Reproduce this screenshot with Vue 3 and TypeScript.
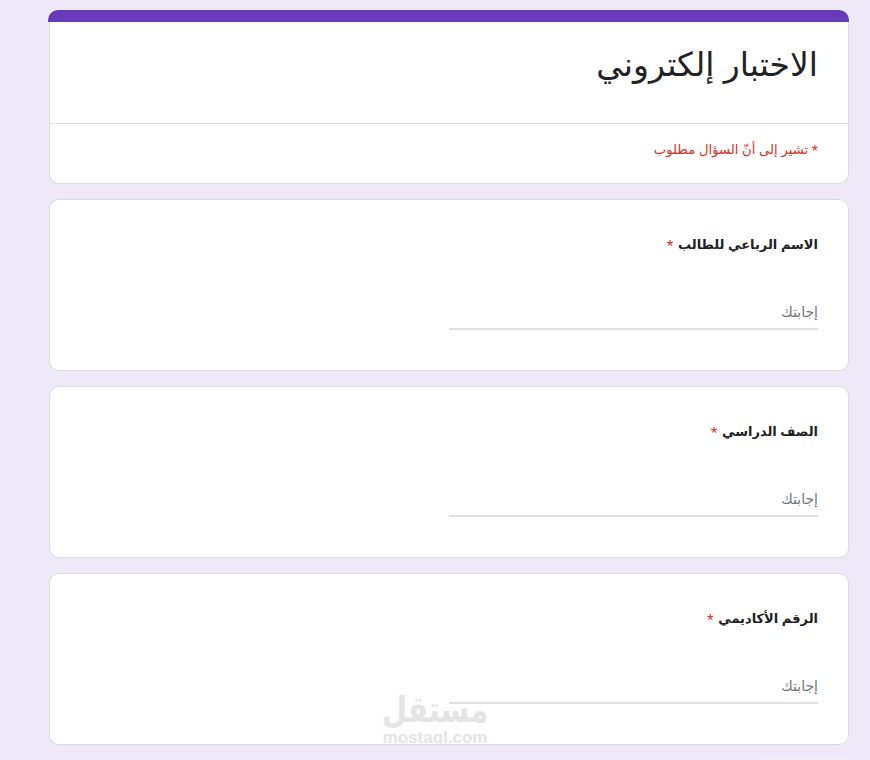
<script setup lang="ts">
const questions: string[] = ['الاسم الرباعي للطالب', 'الصف الدراسي', 'الرقم الأكاديمي']
</script>

<template>
  <div class="page" dir="rtl">
    <section class="card head">
      <div class="stripe"></div>
      <h1 class="title">الاختبار إلكتروني</h1>
      <div class="note"><span class="note-star">*</span> تشير إلى أنّ السؤال مطلوب</div>
    </section>
    <section v-for="q in questions" :key="q" class="card question">
      <div class="label">{{ q }} <span class="star">*</span></div>
      <div class="answer">إجابتك</div>
    </section>
    <div class="tail"></div>
    <div class="mark" dir="rtl">
      <div class="mark-ar">مستقل</div>
      <div class="mark-en">mostaql.com</div>
    </div>
  </div>
</template>

<style scoped>
.page {
  position: relative;
  box-sizing: border-box;
  width: 870px;
  height: 760px;
  overflow: hidden;
  background: #ede9f8;
  padding: 10px 21px 0 49px;
  display: flex;
  flex-direction: column;
  gap: 15px;
  font-family: "Liberation Sans", "DejaVu Sans", sans-serif;
  color: #202124;
}
.card {
  box-sizing: border-box;
  background: #fff;
  border: 1px solid #dadce0;
  border-radius: 10px;
  width: 800px;
}
.head {
  height: 174px;
  border-top: 0;
}
.stripe {
  height: 12px;
  margin: 0 -1px 0 -2px;
  background: #673ab7;
  border-radius: 10px 10px 0 0;
}
.title {
  margin: 0;
  height: 102px;
  box-sizing: border-box;
  padding: 23px 30px 0;
  border-bottom: 1px solid #dadce0;
  font-size: 33px;
  font-weight: 400;
  line-height: 40px;
  color: #202124;
}
.note {
  padding: 16px 30px 0;
  font-size: 13.2px;
  line-height: 20px;
  color: #d93025;
}
.note-star {
  font-size: 16px;
  line-height: 0;
  vertical-align: -3px;
}
.question {
  height: 172px;
  padding: 35px 30px 0;
}
.label {
  font-size: 13px;
  font-weight: 700;
  line-height: 20px;
}
.star {
  color: #d93025;
  font-size: 17px;
  font-weight: 400;
  margin-right: 1px;
  line-height: 0;
  vertical-align: -3px;
}
.answer {
  margin-top: 46px;
  width: 369px;
  height: 29px;
  box-sizing: border-box;
  padding-top: 1px;
  border-bottom: 2px solid #e0e0e0;
  font-size: 14px;
  line-height: 20px;
  color: #70757a;
}
.tail {
  align-self: flex-start;
  width: 90px;
  height: 1px;
  margin: -2px 1px 0 0;
  background: #f3f0fb;
}
.mark {
  position: absolute;
  left: 382px;
  top: 693px;
  width: 106px;
  text-align: center;
  color: #e2e2e2;
  opacity: 0.9;
}
.mark-ar {
  font-size: 36px;
  font-weight: 700;
  line-height: 34px;
  white-space: nowrap;
  display: flex;
  justify-content: center;
  transform: scaleX(0.81);
}
.mark-en {
  font-size: 17px;
  font-weight: 700;
  line-height: 18px;
  margin-top: 2px;
}
</style>
